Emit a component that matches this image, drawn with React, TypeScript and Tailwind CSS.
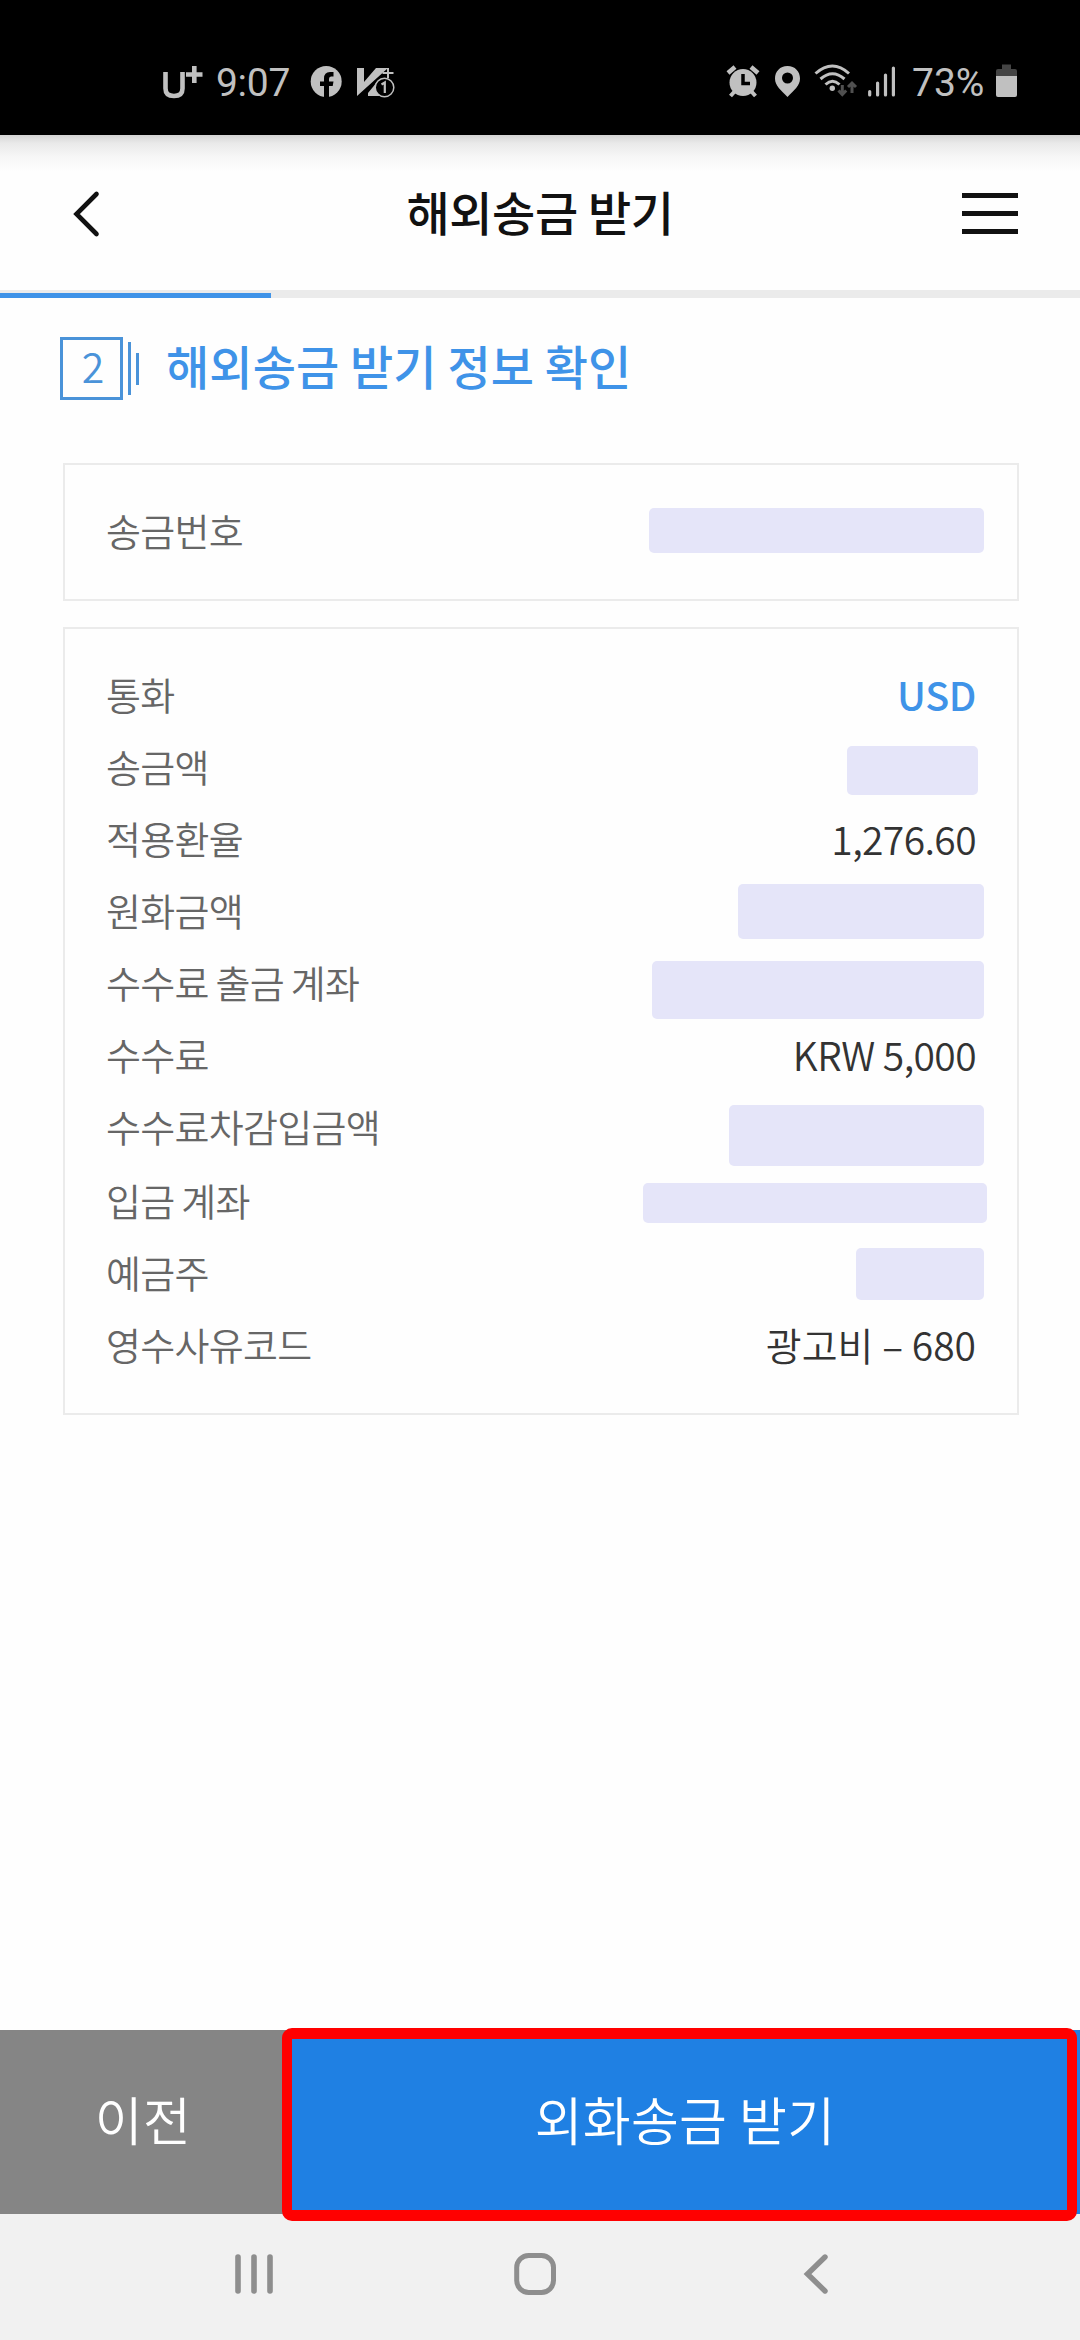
type Row = { label: string; value?: string; tone?: string; mask?: string };

const rows: Row[] = [
  { label: "통화", value: "USD", tone: "text-[39.5px] font-medium tracking-[-0.4px] text-[#3f93e8]" },
  { label: "송금액", mask: "w-[131px] h-[49px] mt-[14px] mr-[-2px]" },
  { label: "적용환율", value: "1,276.60", tone: "text-[39px] font-[350] tracking-[-0.6px] text-[#333]" },
  { label: "원화금액", mask: "w-[246px] h-[55px] mt-[8px] mr-[-8px]" },
  { label: "수수료 출금 계좌", mask: "w-[332px] h-[58px] mt-[13px] mr-[-8px]" },
  { label: "수수료", value: "KRW 5,000", tone: "text-[39px] font-[350] tracking-[-0.6px] text-[#333]" },
  { label: "수수료차감입금액", mask: "w-[255px] h-[61px] mt-[13px] mr-[-8px]" },
  { label: "입금 계좌", mask: "w-[344px] h-[40px] mt-[17px] mr-[-11px]" },
  { label: "예금주", mask: "w-[128px] h-[52px] mt-[10px] mr-[-8px]" },
  { label: "영수사유코드", value: "광고비 – 680", tone: "text-[39px] font-[350] text-[#333]" },
];

function StatusBar() {
  return (
    <div className="flex h-[135px] shrink-0 bg-black pt-[60px] text-[#c0c0c0]">
      <svg className="ml-[160px] h-[42px] w-[46px]" viewBox="160 60 46 42" fill="none" stroke="#c0c0c0">
        <path d="M165.500 72V88.500Q165.500 96 174 96T182.500 88.500V72" strokeWidth="4.600" />
        <path d="M186 74.500H202.500M194.300 66V83" strokeWidth="4.600" />
      </svg>
      <span className="ml-[10px] w-[80px] pt-px font-[Roboto] text-[39px] font-normal leading-[44px] tracking-[-0.3px]">9:07</span>
      <svg className="ml-[10px] h-[42px] w-[92px]" viewBox="306 60 92 42">
        <circle cx="326.200" cy="81.500" r="15.500" fill="#c0c0c0" />
        <path d="M324 98V86H320V81.500H324V78.500Q324 72 330 72H333.500V76.500H331Q329 76.500 329 79V81.500H333.500L332.700 86H329V98Z" fill="#000" />
        <path d="M357 68H364V82L376 68H388L357 96Z" fill="#c0c0c0" />
        <path d="M368 93L377 82L380 94L382 96H368Z" fill="#c0c0c0" />
        <path d="M382.500 73H393.500M388 68V78" stroke="#c0c0c0" strokeWidth="2" />
        <circle cx="384.500" cy="87.500" r="9.300" fill="#000" stroke="#c0c0c0" strokeWidth="1.500" />
        <path d="M381.500 84.500L384.800 82.500V93" stroke="#c0c0c0" strokeWidth="2.200" fill="none" />
      </svg>
      <svg className="ml-[324px] h-[42px] w-[178px]" viewBox="722 60 178 42" fill="none" stroke="#c0c0c0">
        <path d="M728 73L735 67M758 73L751 67" strokeWidth="4.500" />
        <path d="M735 91L730.500 96M751 91L755.500 96" strokeWidth="4" />
        <circle cx="743" cy="82.500" r="13.500" fill="#c0c0c0" stroke="none" />
        <path d="M743 74V83.500H750" stroke="#000" strokeWidth="3.500" />
        <path fillRule="evenodd" d="M787.500 66C780 66 775 71.500 775 78.500C775 86 781 90 787.500 97C794 90 800 86 800 78.500C800 71.500 795 66 787.500 66ZM787.500 72.500A5.500 5.500 0 1 1 787.500 83.500A5.500 5.500 0 1 1 787.500 72.500Z" fill="#c0c0c0" stroke="none" />
        <path d="M815.500 73.500Q832.500 58.500 849 73.500" strokeWidth="3" />
        <path d="M820.500 79Q832.500 68.500 844.500 79" strokeWidth="3" />
        <path d="M825.500 84.500Q832.500 78 839.500 84.500" strokeWidth="3" />
        <circle cx="832.300" cy="88.300" r="2.700" fill="#c0c0c0" stroke="none" />
        <path d="M842.300 85V93M838.500 90.500L842.300 94.500L846.200 90.500M852 93V84M848 87L852 83L856 87" stroke="#505050" strokeWidth="3" />
        <path d="M869.700 91.500V95M877.600 83V95M885.500 75V95M893.400 68V95" strokeWidth="3.200" strokeLinecap="round" />
      </svg>
      <span className="ml-[12px] w-[75px] whitespace-nowrap pt-px font-[Roboto] text-[39px] font-normal leading-[44px]">73%</span>
      <svg className="ml-[7px] h-[42px] w-[26px]" viewBox="994 60 26 42">
        <path d="M1002 64.500H1011V69H1002Z" fill="#444" />
        <path d="M996 77V71Q996 69 998 69H1015Q1017 69 1017 71V77Z" fill="#444" />
        <path d="M996 76H1017V95Q1017 97 1015 97H998Q996 97 996 95Z" fill="#c0c0c0" />
      </svg>
    </div>
  );
}

function Header() {
  return (
    <header className="flex h-[155px] shrink-0 items-start justify-between bg-[linear-gradient(#d4d4d4_0px,#e9e9e9_8px,#f7f7f7_22px,#fefefe_36px)]">
      <svg className="ml-[70px] mt-[52px] h-[54px] w-[48px]" viewBox="70 187 48 54" fill="none">
        <path d="M96.500 194L76.500 214L96.500 234" stroke="#111" strokeWidth="4.600" strokeLinecap="round" />
      </svg>
      <h1 className="mt-[44px] text-[47px] font-medium leading-[64px] tracking-[-0.400px] text-[#111]">해외송금 받기</h1>
      <div className="mr-[62px] mt-[58px] flex w-[56px] flex-col gap-[13px]">
        <span className="h-[5px] bg-[#111]" />
        <span className="h-[5px] bg-[#111]" />
        <span className="h-[5px] bg-[#111]" />
      </div>
    </header>
  );
}

function InfoRow({ row }: { row: Row }) {
  return (
    <div className="flex flex-1 items-start justify-between">
      <span className="pt-[4px] text-[38px] font-[350] leading-[60px] tracking-[-0.7px] text-[#666] [word-spacing:-1px]">{row.label}</span>
      {row.mask ? (
        <span className={`shrink-0 rounded-[5px] bg-[#e5e5f9] ${row.mask}`} />
      ) : (
        <span className={`pt-[4px] leading-[60px] ${row.tone}`}>{row.value}</span>
      )}
    </div>
  );
}

export default function App() {
  return (
    <div className="flex h-[2340px] w-[1080px] flex-col overflow-hidden bg-[#fefefe] font-['Noto_Sans_CJK_KR','Noto_Sans',sans-serif]">
      <StatusBar />
      <Header />
      <div className="flex h-2 shrink-0 items-end bg-[#ebebeb]">
        <div className="h-[5px] w-[271px] bg-[#3f93e8]" />
      </div>
      <div className="mt-[39px] flex h-[63px] shrink-0 items-center pl-[60px] text-[#3f93e8]">
        <div className="flex h-[63px] w-[63px] justify-center border-[3px] border-[#4a93d9] pl-[3px] text-[41px] font-[350] leading-[51px] text-[#4a93d9]">2</div>
        <span className="ml-[5px] h-[53px] w-[3px] bg-[#4a93d9]" />
        <span className="ml-[5px] h-[32px] w-[3px] bg-[#4a93d9]" />
        <h2 className="mb-[7px] ml-[27px] whitespace-nowrap text-[47px] font-medium leading-[64px] tracking-[0.100px]">해외송금 받기 정보 확인</h2>
      </div>
      <section className="ml-[63px] mt-[63px] flex h-[138px] w-[956px] shrink-0 justify-between border-2 border-[#ebebeb] pl-[41px] pr-[33px]">
        <span className="pt-[35px] text-[38px] font-[350] leading-[60px] tracking-[-0.7px] text-[#666]">송금번호</span>
        <span className="mt-[43px] h-[45px] w-[335px] rounded-[5px] bg-[#e5e5f9]" />
      </section>
      <section className="ml-[63px] mt-[26px] flex h-[788px] w-[956px] shrink-0 flex-col border-2 border-[#ebebeb] py-[31px] pl-[41px] pr-[41px]">
        {rows.map((row) => (
          <InfoRow key={row.label} row={row} />
        ))}
      </section>
      <div className="relative mt-auto flex h-[184px] shrink-0 text-[52px] font-[350] tracking-[0.3px] text-white">
        <button className="w-[286px] bg-[#858585] pb-[6px]">이전</button>
        <button className="flex-1 bg-[#1f80e3] pb-[6px] pl-[4px]">외화송금 받기</button>
        <div className="absolute left-[282px] top-[-2px] h-[193px] w-[795px] rounded-[10px] border-[10px] border-y-[11px] border-[#f00]" />
      </div>
      <nav className="h-[126px] shrink-0 bg-[#f1f1f1]">
        <svg className="ml-[220px] h-[126px] w-[640px]" viewBox="220 2214 640 126" fill="none" stroke="#8e8e8e">
          <path d="M238 2257V2291M254 2257V2291M270 2257V2291" strokeWidth="5.600" strokeLinecap="round" />
          <rect x="516.700" y="2255.500" width="36.800" height="37" rx="12" strokeWidth="5" />
          <path d="M825 2257L807.500 2274L825 2291" strokeWidth="5.400" strokeLinecap="round" />
        </svg>
      </nav>
    </div>
  );
}
